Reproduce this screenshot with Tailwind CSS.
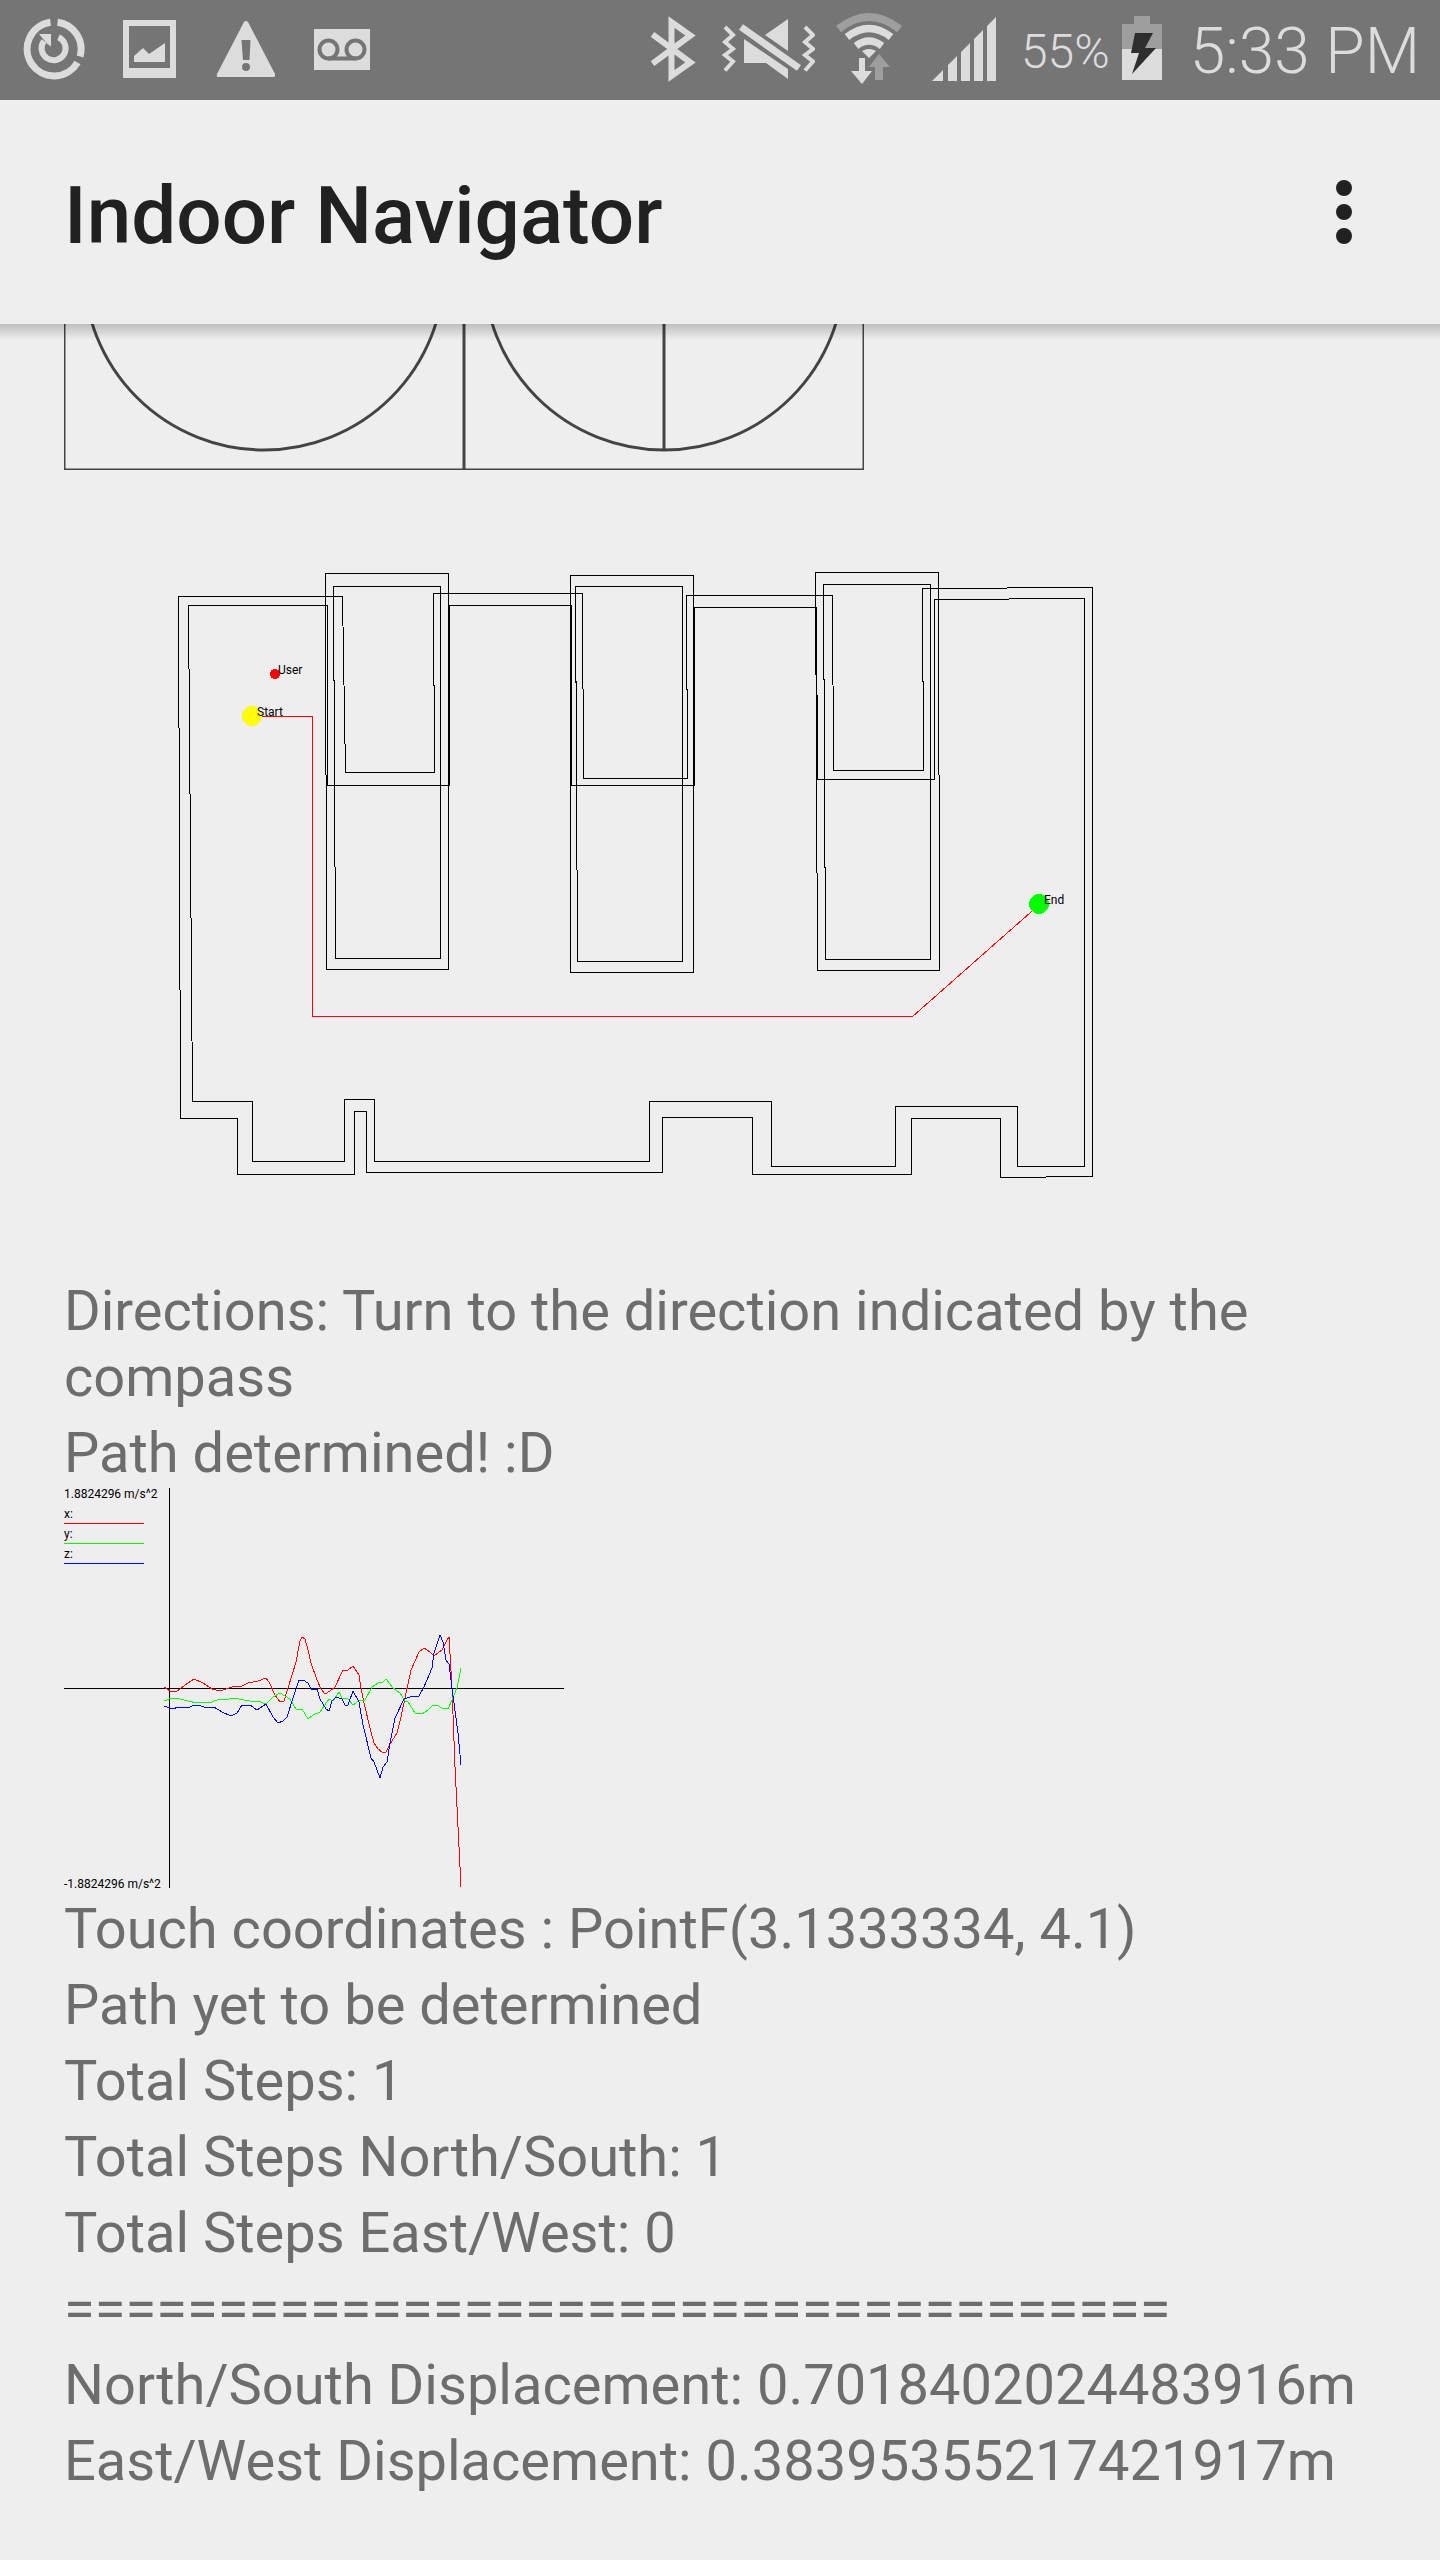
<!DOCTYPE html>
<html lang="en">
<head>
<meta charset="utf-8">
<meta name="viewport" content="width=device-width, initial-scale=1">
<title>Indoor Navigator</title>
<script src="https://cdn.jsdelivr.net/npm/@tailwindcss/browser@4"></script>
</head>
<body class="min-h-screen bg-[#eeeeee] font-['Roboto',sans-serif]">

<!-- Status bar -->
<div class="flex h-[100px] items-center justify-between bg-[#757575] pr-5 pl-[23px] text-[#dcdcdc]">
  <div class="flex items-center gap-[38px]">
    <svg class="h-[100px] w-[62px]" viewBox="0 0 62 100" fill="none" stroke="#dcdcdc">
      <path stroke-width="7" d="M27.500 22.200A27 27 0 1 0 54.500 62.500M34.500 22.200A27 27 0 0 1 57 56.500"/>
      <path stroke-width="6" d="M35.500 37.300A12 12 0 1 1 21 41"/>
      <path fill="#dcdcdc" stroke="none" d="M16 34H28V46.500L24.500 44L21 40Z"/>
    </svg>
    <svg class="h-[100px] w-[54px]" viewBox="0 0 54 100" fill="#dcdcdc">
      <path fill-rule="evenodd" d="M0 20H53V78H0ZM6 26V68H47V26Z"/>
      <path d="M11 62V56L20 48L26 54L42 43V62Z"/>
    </svg>
    <svg class="h-[100px] w-[60px]" viewBox="0 0 60 100" fill="#dcdcdc">
      <path d="M29 22Q31 20 33 22L60 74Q61 77 58 77H3Q1 77 2 74Z"/>
      <path fill="#757575" d="M26.500 40H35.500L34.500 60H28Z"/><circle cx="31" cy="67" r="4" fill="#757575"/>
    </svg>
    <svg class="h-[100px] w-[57px]" viewBox="0 0 57 100">
      <path fill="#dcdcdc" d="M1 29H57V70H1Z"/>
      <g fill="none" stroke="#757575" stroke-width="4"><circle cx="15.500" cy="49.500" r="9"/><circle cx="42.500" cy="49.500" r="9"/><path d="M15 58.500H43"/></g>
    </svg>
  </div>
  <div class="flex items-center">
    <div class="mr-5 flex items-center gap-5">
      <svg class="h-[100px] w-[51px]" viewBox="0 0 51 100" fill="none" stroke="#dcdcdc">
        <path stroke-width="6" d="M1.500 34.500L39.500 62.500L20.500 76V22L39.500 35.500L1.500 63.500"/>
      </svg>
      <svg class="h-[100px] w-[93px]" viewBox="0 0 93 100" fill="#dcdcdc">
        <path d="M43 35L66 19V51ZM22 39L66 69V79L44 63H22Z"/>
        <path fill="none" stroke="#dcdcdc" stroke-width="7" d="M19 27L77 68"/>
        <path fill="none" stroke="#dcdcdc" stroke-width="4" d="M3 27L11 35L3 42L11 49L3 55L11 61.500L3 70.500M83 27L91 35L83 42L91 49L83 55L91 61.500L83 70.500"/>
      </svg>
      <svg class="h-[100px] w-[68px]" viewBox="0 0 68 100" fill="none">
        <path stroke="#9e9e9e" stroke-width="8" d="M3.500 29Q34 5 64.500 29"/>
        <path stroke="#dcdcdc" stroke-width="7.500" d="M12 37Q34 20 56 37M21 46Q34 36 47 46"/>
        <path fill="#dcdcdc" d="M27 51Q34 47 41 51L34 58ZM24 58H30V71H37L27 84L16 71H24Z"/>
        <path fill="#9e9e9e" d="M44 54L55 67H48V80H40V67H34Z"/>
      </svg>
      <svg class="h-[100px] w-[78px]" viewBox="0 0 78 100" fill="#dcdcdc">
        <path d="M9 81L20 70V81ZM25 65L34 56V81H25ZM38 52L47 43V81H38ZM51 39L60 30V81H51ZM64 26L73 17V81H64Z"/>
      </svg>
    </div>
    <span class="mr-3 pt-1 text-[48px] leading-[96px] font-light">55%</span>
    <svg class="mr-7 h-[100px] w-10" viewBox="0 0 40 100">
      <path fill="#9e9e9e" d="M12 16H28V24H40V50H0V24H12Z"/><path fill="#dcdcdc" d="M0 49H40V80H0Z"/>
      <path fill="#2e2e2e" d="M13 33H31L23 48H34L10 74L17 53H9Z"/>
    </svg>
    <span class="pt-1 text-[64px] leading-[96px] font-light">5:33 PM</span>
  </div>
</div>

<!-- App bar -->
<header class="relative flex h-56 items-center justify-between pr-16 pl-16 text-[#212121]">
  <h1 class="pt-2 text-[80px] leading-[96px] font-medium">Indoor Navigator</h1>
  <button type="button" aria-label="More options" class="flex w-16 flex-col items-center gap-2">
    <span class="size-4 rounded-full bg-[#212121]"></span>
    <span class="size-4 rounded-full bg-[#212121]"></span>
    <span class="size-4 rounded-full bg-[#212121]"></span>
  </button>
  <div class="absolute top-full left-0 h-4 w-full bg-linear-to-b from-black/20 to-black/0"></div>
</header>

<main class="px-16 pb-16 text-[56px] leading-[66px] text-[#6d6d6d]">
  <!-- Compass dials, scrolled partly under the app bar -->
  <svg class="block h-[146px] w-full" fill="none" stroke="#444444" stroke-width="3" aria-label="Compass">
    <circle cx="200" cy="-54" r="180"/><circle cx="600" cy="-54" r="180"/>
    <path d="M400 0V145M600 0V126"/>
    <path stroke-width="1.500" d="M0.750 0V145.250H799.250V0"/>
  </svg>

  <!-- Floor plan -->
  <svg class="block h-[800px] w-full overflow-visible" fill="none" shape-rendering="crispEdges" aria-label="Floor plan">
    <g transform="translate(-63.5 -469.5)">
      <g stroke="#000">
        <path d="M178 596H342L345 772H434L433 593H582L583 778H687L686 595H832L833 770H923L922 588L1092 587V1176L1000 1177V1118H911V1174H752V1117H662V1172H366V1111H354V1174H237V1118H180Z"/>
        <path d="M188 605H327V785H449V605H571V785H694V607H816L817 779H934V599L1084 598V1166H1017V1106H895V1166H771V1101H649V1161H374V1099H344V1161H252V1101H192Z"/>
        <path d="M325 573H448V969H326ZM333 586H440V958H335ZM570 575H693V972H570ZM575 586H682V961H577ZM815 572H938L939 970H817ZM823 584H930V959H825Z"/>
      </g>
      <path stroke="#f00" d="M252 716H312V1016H912L1039 904"/>
    </g>
    <g transform="translate(-64 -470)">
      <circle cx="275" cy="674" r="5" fill="#f00"/>
      <circle cx="252" cy="716" r="10" fill="#ff0"/>
      <circle cx="1039" cy="904" r="10" fill="#0f0"/>
      <g fill="#000" class="text-[12px]">
        <text x="278" y="674">User</text><text x="257" y="716">Start</text><text x="1044" y="904">End</text>
      </g>
    </g>
  </svg>

  <p class="pt-2 pb-[2px]">Directions: Turn to the direction indicated by the compass</p>
  <p class="pt-2 pb-[2px]">Path determined! :D</p>

  <!-- Accelerometer graph -->
  <svg class="block h-[400px] w-full overflow-visible" fill="none" shape-rendering="crispEdges" aria-label="Acceleration graph">
    <g fill="#000" class="text-[12px] leading-[14px]">
      <text x="0" y="10">1.8824296 m/s^2</text>
      <text x="0" y="30">x:</text><text x="0" y="50">y:</text><text x="0" y="70">z:</text>
      <text x="0" y="400">-1.8824296 m/s^2</text>
    </g>
    <path stroke="#000" d="M105.500 0V400M0 200.500H500"/>
    <path stroke="#f00" d="M0 35.500H80"/><path stroke="#0f0" d="M0 55.500H80"/><path stroke="#00f" d="M0 75.500H80"/>
    <polyline stroke="#f00" points="100,199 106,203 112,204 121,197 130,191 139,195 148,201 156,203 168,199 178,198 184,195 194,193 202,190 205,194 211,207 216,214 220,213 224,200 232,174 236,153 238,149 241,151 244,162 247,175 253,192 257,201 261,206 266,203 271,199 279,182 284,182 289,178 295,187 297,200 300,215 306,240 310,255 314,261 318,264 322,264 326,256 333,245 337,229 341,210 347,182 355,164 360,160 366,164 370,168 378,162 382,154 385,149 388,200 391,279 397,399"/>
    <polyline stroke="#0f0" points="100,213 108,210 116,211 124,213 133,215 148,214 155,211 161,212 169,210 186,213 194,213 202,216 209,209 216,205 226,211 232,221 238,221 244,231 249,227 256,224 265,211 269,213 275,204 278,210 284,211 289,217 296,212 301,212 308,199 314,195 319,194 322,191 329,200 336,205 341,213 344,214 351,225 358,226 364,222 368,218 373,217 378,220 384,221 388,212 393,200 397,180"/>
    <polyline stroke="#00f" points="100,218 109,221 114,219 124,220 130,217 137,218 143,220 150,219 158,224 167,228 173,225 178,217 186,217 193,222 202,216 209,229 214,235 219,233 223,229 229,210 235,192 239,192 244,195 247,201 253,201 256,211 262,221 265,223 268,213 272,209 278,211 281,217 284,217 289,203 295,214 299,237 307,270 310,274 316,290 319,279 323,274 326,255 331,230 340,211 346,209 355,208 360,199 368,180 370,165 376,147 379,154 382,172 385,176 388,200 394,245 397,277"/>
  </svg>

  <p class="pt-2 pb-[2px]">Touch coordinates : PointF(3.1333334, 4.1)</p>
  <p class="pt-2 pb-[2px]">Path yet to be determined</p>
  <p class="pt-2 pb-[2px]">Total Steps: 1</p>
  <p class="pt-2 pb-[2px]">Total Steps North/South: 1</p>
  <p class="pt-2 pb-[2px]">Total Steps East/West: 0</p>
  <p class="pt-2 pb-[2px]">====================================</p>
  <p class="pt-2 pb-[2px]">North/South Displacement: 0.7018402024483916m</p>
  <p class="pt-2 pb-[2px]">East/West Displacement: 0.38395355217421917m</p>
</main>
</body>
</html>
